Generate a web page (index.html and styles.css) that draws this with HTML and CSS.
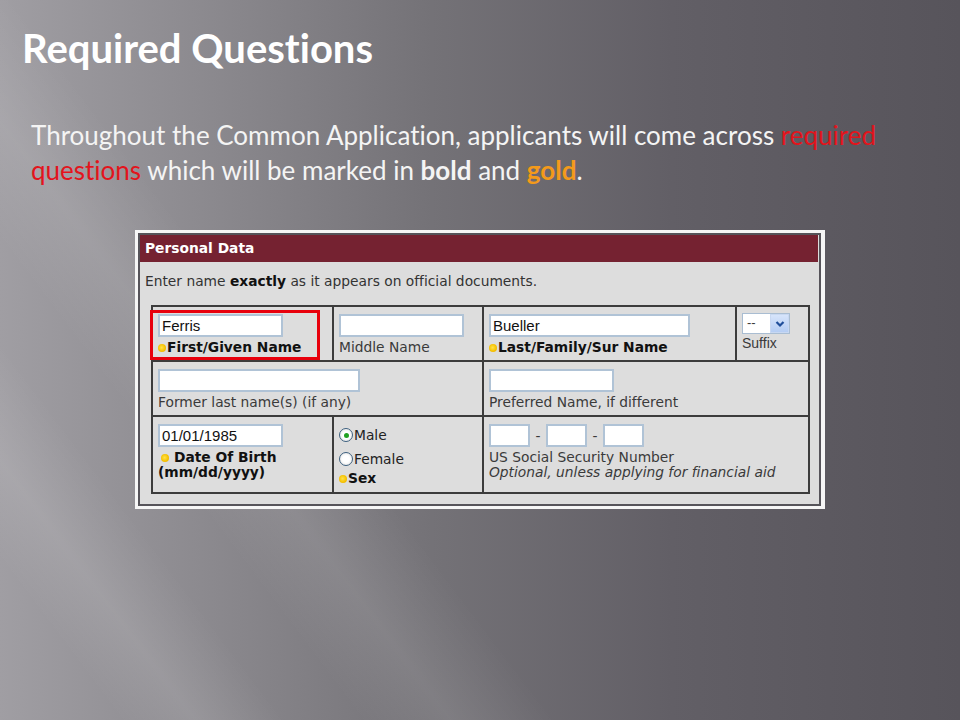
FILE: index.html
```
<!DOCTYPE html>
<html lang="en">
<head>
    <meta charset="UTF-8">
    <title>Required Questions</title>
    <link rel="stylesheet" href="styles.css">
</head>
<body>
    <div class="slide">
        <h1 class="title">Required Questions</h1>
        <p class="intro">Throughout the Common Application, applicants will come across <span class="red">required</span> <span class="red">questions</span> which will be marked in <b>bold</b> and <b class="gold">gold</b>.</p>

        <div class="shot">
            <div class="panel">
                <div class="panel-head">Personal Data</div>
                <p class="panel-note">Enter name <b>exactly</b> as it appears on official documents.</p>

                <table class="grid">
                    <colgroup>
                        <col class="c1"><col class="c2"><col class="c3"><col class="c4">
                    </colgroup>
                    <tr class="r1">
                        <td class="focus">
                            <input class="field w124" type="text" value="Ferris">
                            <div class="label req"><span class="dot"></span>First/Given Name</div>
                            <!-- red box drawn over the first field -->
                            <div class="callout"></div>
                        </td>
                        <td>
                            <input class="field w124" type="text" value="">
                            <div class="label">Middle Name</div>
                        </td>
                        <td>
                            <input class="field w201" type="text" value="Bueller">
                            <div class="label req"><span class="dot"></span>Last/Family/Sur Name</div>
                        </td>
                        <td>
                            <div class="select">
                                <span class="select-val">--</span>
                                <span class="select-btn">
                                    <svg width="10" height="8" viewBox="0 0 10 8"><path d="M1.5 2 L5 5.5 L8.5 2" fill="none" stroke="#1f4e9a" stroke-width="2.2"/></svg>
                                </span>
                            </div>
                            <div class="label suffix">Suffix</div>
                        </td>
                    </tr>
                    <tr class="r2">
                        <td colspan="2">
                            <input class="field w202" type="text" value="">
                            <div class="label">Former last name(s) (if any)</div>
                        </td>
                        <td colspan="2">
                            <input class="field w124" type="text" value="">
                            <div class="label">Preferred Name, if different</div>
                        </td>
                    </tr>
                    <tr class="r3">
                        <td>
                            <input class="field w124" type="text" value="01/01/1985">
                            <div class="label req"><span class="dot dot-gap"></span>Date Of Birth<br>(mm/dd/yyyy)</div>
                        </td>
                        <td class="radios">
                            <div class="radio-row"><span class="radio on"></span>Male</div>
                            <div class="radio-row"><span class="radio"></span>Female</div>
                            <div class="label req"><span class="dot"></span>Sex</div>
                        </td>
                        <td colspan="2">
                            <div class="ssn">
                                <input class="field w40" type="text" value="">
                                <span class="dash">-</span>
                                <input class="field w40" type="text" value="">
                                <span class="dash">-</span>
                                <input class="field w40" type="text" value="">
                            </div>
                            <div class="label">US Social Security Number</div>
                            <div class="label hint">Optional, unless applying for financial aid</div>
                        </td>
                    </tr>
                </table>
            </div>
        </div>
    </div>
</body>
</html>
```

FILE: styles.css
```
* {
    margin: 0;
    padding: 0;
    box-sizing: border-box;
}

body {
    width: 960px;
    height: 720px;
    overflow: hidden;
    font-family: 'Lato', 'Open Sans', sans-serif;
    font-variant-ligatures: none;
    background:
        linear-gradient(53deg, rgba(255,255,255,0) 8%, rgba(255,255,255,0.10) 13%, rgba(255,255,255,0) 19%,
                               rgba(255,255,255,0) 24%, rgba(255,255,255,0.09) 30%, rgba(255,255,255,0) 37%),
        linear-gradient(to right, #a09ea3 0%, #8b898e 22%, #747277 45%, #625f66 70%, #57545b 100%);
}

.slide {
    padding-top: 25px;
}

.title {
    font-size: 40px;
    font-weight: bold;
    color: #ffffff;
    padding-left: 22px;
    line-height: 46px;
}

.intro {
    margin-top: 47px;
    padding-left: 31px;
    width: 900px;
    font-size: 26px;
    line-height: 35px;
    color: #f4f4f4;
}

.red {
    color: #e3141c;
}

.gold {
    color: #f49a1a;
}

/* screenshot of the form */
.shot {
    margin-top: 42px;
    margin-left: 135px;
    width: 690px;
    border: 3px solid #f6f6f6;
    border-right-width: 4px;
}

.panel {
    border: 2px solid #56545a;
    background-color: #dddddd;
    font-family: 'DejaVu Sans', Verdana, sans-serif;
    font-size: 13.8px;
    color: #3a3a3a;
    padding-bottom: 10px;
}

.panel-head {
    background-color: #752231;
    color: #ffffff;
    font-weight: bold;
    height: 27px;
    line-height: 27px;
    padding-left: 5px;
    margin-right: 1px;
}

.panel-note {
    padding: 11px 0 0 5px;
    height: 43px;
    line-height: 16px;
    color: #333333;
}

.panel-note b {
    color: #111111;
}

.grid {
    margin-left: 11px;
    width: 657px;
    table-layout: fixed;
    border-collapse: collapse;
    border: 2px solid #3c3c3c;
}

.c1 { width: 181px; }
.c2 { width: 150px; }
.c3 { width: 253px; }
.c4 { width: 73px; }

.grid td {
    border: 2px solid #3c3c3c;
    vertical-align: top;
    padding: 7px 5px 0 5px;
}

.r1 td, .r2 td {
    height: 55px;
}

.r3 td {
    height: 77px;
}

.field {
    display: block;
    height: 23px;
    border: 2px solid #b0c3d6;
    background: #ffffff;
    font-family: 'Liberation Sans', Arial, sans-serif;
    font-size: 15px;
    color: #111111;
    padding: 0 2px;
    outline: none;
}

.w124 { width: 125px; }
.w201 { width: 201px; }
.w202 { width: 202px; }
.w40 { width: 41px; }

.label {
    line-height: 15px;
    margin-top: 3px;
    white-space: nowrap;
}

.label.req {
    font-weight: bold;
    color: #111111;
}

.hint {
    font-style: italic;
    margin-top: 0;
}

.dot {
    display: inline-block;
    width: 8px;
    height: 8px;
    border-radius: 50%;
    background: radial-gradient(circle at 45% 45%, #ffe24a 0%, #f5c000 60%, #e9a800 100%);
    margin-right: 1px;
    vertical-align: 0;
}

.dot-gap {
    margin: 0 5px 0 3px;
}

.focus {
    position: relative;
}

.callout {
    position: absolute;
    left: -3px;
    top: 3px;
    width: 170px;
    height: 50px;
    border: 3px solid #e8000c;
}

.select {
    display: flex;
    width: 48px;
    height: 21px;
    margin-top: -1px;
    border: 1px solid #a9bdd2;
    background: #ffffff;
    font-family: 'Liberation Sans', Arial, sans-serif;
    font-size: 13px;
}

.select-val {
    flex: 1;
    padding-left: 4px;
    line-height: 18px;
}

.select-btn {
    width: 19px;
    background: linear-gradient(#d6e4fb, #b5cdf3);
    border: 1px solid #c8d8f2;
    display: flex;
    align-items: center;
    justify-content: center;
}

.suffix {
    margin-top: 2px;
    font-family: 'Liberation Sans', Arial, sans-serif;
    font-size: 14px;
}

.radios {
    padding-top: 10px !important;
}

.radio-row {
    display: flex;
    align-items: center;
    height: 24px;
    margin-top: -4px;
    margin-bottom: 4px;
    color: #222222;
}

.radio-row + .radio-row {
    margin-top: -4px;
    margin-bottom: 0;
}

.radio {
    width: 14px;
    height: 14px;
    border-radius: 50%;
    border: 1px solid #3c5f7e;
    background: radial-gradient(circle, #ffffff 40%, #dcdcdc 100%);
    margin-right: 1px;
    display: flex;
    align-items: center;
    justify-content: center;
}

.radio.on::after {
    content: "";
    width: 5px;
    height: 5px;
    border-radius: 50%;
    background: #21a121;
}

.radios .label {
    margin-top: 0;
}

.ssn {
    display: flex;
    align-items: center;
}

.dash {
    width: 16px;
    text-align: center;
}
```
